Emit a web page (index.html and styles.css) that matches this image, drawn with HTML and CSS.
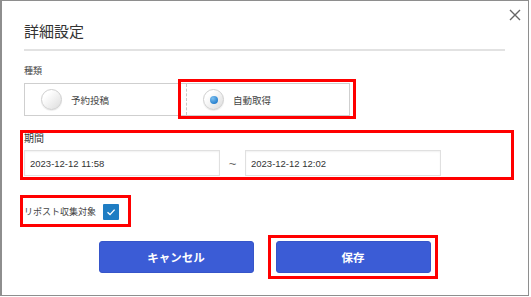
FILE: index.html
```html
<!DOCTYPE html>
<html lang="ja">
<head>
  <meta charset="UTF-8" />
  <meta name="viewport" content="width=device-width, initial-scale=1.0"/>
  <title>詳細設定</title>
  <link rel="stylesheet" href="styles.css">
</head>
<body>
  <div class="dialog">
    <button class="close" aria-label="閉じる">
      <svg width="12" height="12" viewBox="0 0 12 12"><path d="M1 1L11 11M11 1L1 11" stroke="#666" stroke-width="1.4" fill="none"/></svg>
    </button>

    <h1 class="title">詳細設定</h1>

    <div class="field-type">
      <div class="label-small">種類</div>
      <div class="radio-group">
        <label class="option"><span class="radio"></span>予約投稿</label>
        <label class="option checked mark mark-type"><span class="radio"></span>自動取得</label>
      </div>
    </div>

    <div class="period mark mark-period">
      <div class="label">期間</div>
      <div class="range">
        <input class="date" type="text" value="2023-12-12 11:58">
        <span class="tilde">~</span>
        <input class="date" type="text" value="2023-12-12 12:02">
      </div>
    </div>

    <div class="repost mark mark-repost">
      <span>リポスト収集対象</span>
      <span class="check">
        <svg width="16" height="16" viewBox="0 0 16 16"><path d="M4.5 8.3L7 10.6L11.6 5.6" stroke="#fff" stroke-width="1.4" fill="none"/></svg>
      </span>
    </div>

    <div class="actions">
      <button class="btn">キャンセル</button>
      <button class="btn mark mark-save">保存</button>
    </div>
  </div>
</body>
</html>
```

FILE: styles.css
```css
* {
  box-sizing: border-box;
}

body {
  margin: 0;
  background: #fff;
  color: #333;
  font-family: "Noto Sans CJK JP", sans-serif;
}

.dialog {
  position: relative;
  width: 529px;
  height: 296px;
  border: 1px solid #8e8e8e;
  border-left-width: 2px;
  padding: 20px 23px 0 22px;
}

.close {
  position: absolute;
  top: 8px;
  right: 7px;
  width: 12px;
  height: 12px;
  padding: 0;
  border: none;
  background: none;
  display: flex;
}

.title {
  margin: 0;
  font-size: 15px;
  line-height: 20px;
  font-weight: normal;
  color: #333;
  padding-bottom: 8px;
  border-bottom: 2px solid #e2e2e2;
}

.field-type {
  margin-top: 14px;
}

.label-small {
  font-size: 9px;
  line-height: 12px;
  color: #444;
  margin-bottom: 6px;
}

.radio-group {
  display: flex;
  width: 326px;
  height: 33px;
  border: 1px solid #cfcfcf;
}

.option {
  display: flex;
  align-items: center;
  gap: 9px;
  padding-left: 16px;
  font-size: 9.5px;
  color: #444;
}

.option:first-child {
  flex: 0 0 161px;
}

.option + .option {
  flex: 1;
  border-left: 1px dashed #c8c8c8;
}

.radio {
  position: relative;
  width: 21px;
  height: 21px;
  border-radius: 50%;
  border: 1px solid #cfcfcf;
  background: linear-gradient(135deg, #fff 25%, #dcdcdc 100%);
  box-shadow: 0 1px 1px rgba(0, 0, 0, 0.08);
}

.checked .radio::before {
  content: "";
  position: absolute;
  top: 5.5px;
  left: 5.5px;
  width: 8px;
  height: 8px;
  border-radius: 50%;
  background: radial-gradient(circle at 35% 30%, #7cc0f0, #2a82cf 70%);
}

.period {
  margin-top: 14px;
}

.label {
  font-size: 10px;
  line-height: 14px;
  padding-top: 1px;
  color: #333;
  margin-bottom: 5px;
}

.range {
  display: flex;
  align-items: center;
}

.date {
  width: 196px;
  height: 26px;
  margin: 0;
  padding: 0 5px;
  border: 1px solid #e0e0e0;
  box-shadow: inset 0 1px 2px rgba(0, 0, 0, 0.06);
  font-family: "Liberation Sans", "Noto Sans CJK JP", sans-serif;
  font-size: 9.5px;
  color: #333;
  outline: none;
}

.tilde {
  width: 25px;
  text-align: center;
  font-family: "Liberation Sans", sans-serif;
  font-size: 13px;
  color: #666;
}

.repost {
  display: flex;
  align-items: center;
  gap: 7px;
  width: max-content;
  height: 17px;
  margin-top: 27px;
  font-size: 9px;
  color: #444;
}

.check {
  display: flex;
  width: 16px;
  height: 16px;
  border-radius: 1px;
  background: #1f7dc3;
}

.actions {
  display: flex;
  justify-content: center;
  gap: 22px;
  margin-top: 21px;
}

.btn {
  width: 155px;
  height: 32px;
  border: 1px solid #3655c9;
  border-radius: 3px;
  background: #3b5cd6;
  color: #fff;
  font-family: "Noto Sans CJK JP", sans-serif;
  font-size: 11.5px;
  font-weight: bold;
  cursor: pointer;
}

/* red highlight boxes */
.mark {
  position: relative;
}

.mark::after {
  content: "";
  position: absolute;
  border: 3px solid #f00;
  pointer-events: none;
}

.mark-type::after {
  top: -5px;
  bottom: -4px;
  left: -9px;
  right: -7px;
}

.mark-period::after {
  top: 0;
  bottom: -4px;
  left: -4px;
  right: -9px;
}

.mark-repost::after {
  top: -8px;
  bottom: -7px;
  left: -4px;
  right: -12px;
}

.mark-save::after {
  top: -7px;
  bottom: -7px;
  left: -9px;
  right: -8px;
}
```
